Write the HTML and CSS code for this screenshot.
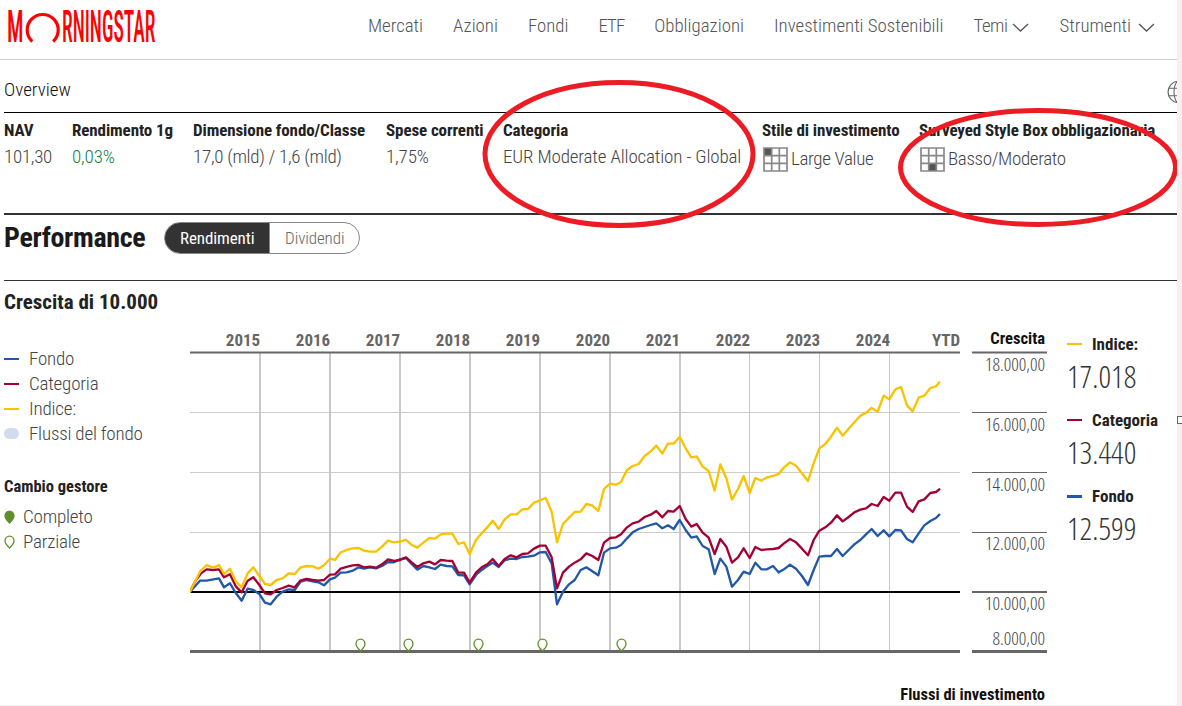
FILE: index.html
```html
<!DOCTYPE html>
<html lang="it">
<head>
<meta charset="utf-8">
<title>Morningstar</title>
<link rel="stylesheet" href="styles.css">
</head>
<body>
<main class="page">
  <header class="topbar">
    <svg class="logo" width="150" height="34" viewBox="7 9 150 34">
      <text class="logo-text" x="7" y="41.5" textLength="16.5" lengthAdjust="spacingAndGlyphs">M</text>
      <path class="logo-arc" d="M32.3 41.5A15.5 15.5 0 1 1 53.1 41.5"/>
      <text class="logo-text" x="62" y="41.5" textLength="93.5" lengthAdjust="spacingAndGlyphs">RNINGSTAR</text>
    </svg>
    <nav class="nav">
      <a>Mercati</a><a>Azioni</a><a>Fondi</a><a class="nav-short">ETF</a><a>Obbligazioni</a><a>Investimenti Sostenibili</a>
      <a class="has-menu nav-temi">Temi <svg class="chev" width="17" height="9" viewBox="0 0 17 9"><path d="M1 1l7.5 7L16 1"/></svg></a>
      <a class="has-menu">Strumenti <svg class="chev" width="17" height="9" viewBox="0 0 17 9"><path d="M1 1l7.5 7L16 1"/></svg></a>
    </nav>
  </header>

  <div class="overview-head">
    <span>Overview</span>
    <svg class="globe" width="24" height="24" viewBox="0 0 22 22"><circle cx="11" cy="11" r="10"/><ellipse cx="11" cy="11" rx="4.6" ry="10"/><path d="M1 7.5h20M1 14.5h20M11 1v20"/></svg>
  </div>

  <section class="stats">
    <div class="stat"><div class="stat-label">NAV</div><div class="stat-value tight">101,30</div></div>
    <div class="stat"><div class="stat-label">Rendimento 1g</div><div class="stat-value is-up">0,03%</div></div>
    <div class="stat"><div class="stat-label">Dimensione fondo/Classe</div><div class="stat-value tight">17,0 (mld) / 1,6 (mld)</div></div>
    <div class="stat"><div class="stat-label">Spese correnti</div><div class="stat-value">1,75%</div></div>
    <div class="stat"><div class="stat-label">Categoria</div><div class="stat-value">EUR Moderate Allocation - Global</div></div>
    <div class="stat"><div class="stat-label">Stile di investimento</div>
      <div class="stat-value with-box">
        <svg class="stylebox" width="25" height="25" viewBox="0 0 25 25"><rect class="cell" x="1" y="1" width="7.7" height="7.7"/><path d="M1 1h23v23H1zM8.7 1v23M16.3 1v23M1 8.7h23M1 16.3h23"/></svg>
        Large Value</div></div>
    <div class="stat"><div class="stat-label">Surveyed Style Box obbligazionaria</div>
      <div class="stat-value with-box">
        <svg class="stylebox" width="25" height="25" viewBox="0 0 25 25"><rect class="cell" x="8.7" y="16.3" width="7.7" height="7.7"/><path d="M1 1h23v23H1zM8.7 1v23M16.3 1v23M1 8.7h23M1 16.3h23"/></svg>
        Basso/Moderato</div></div>
  </section>

  <section class="perf-head">
    <h1>Performance</h1>
    <div class="pill"><span class="pill-on">Rendimenti</span><span class="pill-off">Dividendi</span></div>
  </section>

  <h2 class="growth-title">Crescita di 10.000</h2>

  <section class="chart-row">
    <aside class="legend">
      <div class="legend-row"><i class="swatch blue"></i>Fondo</div>
      <div class="legend-row"><i class="swatch red"></i>Categoria</div>
      <div class="legend-row"><i class="swatch yellow"></i>Indice:</div>
      <div class="legend-row"><i class="swatch flow"></i>Flussi del fondo</div>
      <div class="legend-title">Cambio gestore</div>
      <div class="legend-row pin-row"><svg class="pin filled" width="11" height="14" viewBox="0 0 11 14"><path d="M5.5 13C3 10.500 1 8.500 1 5.700a4.500 4.500 0 0 1 9 0C10 8.500 8 10.500 5.500 13z"/></svg>Completo</div>
      <div class="legend-row pin-row"><svg class="pin" width="11" height="14" viewBox="0 0 11 14"><path d="M5.500 13C3 10.500 1 8.500 1 5.700a4.500 4.500 0 0 1 9 0C10 8.500 8 10.500 5.500 13z"/></svg>Parziale</div>
    </aside>

    <svg class="chart" width="857" height="376" viewBox="190 330 857 376">
      <path class="grid" d="M190 412.500h770M190 472.500h770M190 532.500h770"/>
      <path class="vline" d="M260 353v298M330 353v298M400 353v298M470 353v298M540 353v298M610 353v298M680 353v298"/>
      <path class="vline thin" d="M749.500 353v298M819.500 353v298M889.500 353v298"/>
      <path class="frame" d="M190 352.500h770"/>
      <path class="frame bottom" d="M190 651.500h770"/>
      <path class="zero" d="M190 592h770"/>

      <g transform="translate(0 330) scale(.33333)">
        <g class="series s-blue">
          <polyline points="570,785 600,752 620,752 640,748 657,745 672,772 690,760 708,790 725,812 743,776 760,780 778,792 795,818 812,823 830,800 848,785 866,778 884,780 902,755 920,750 938,754 955,757 972,766 990,748 1005,743 1022,728 1040,727 1058,722 1076,712 1092,716 1110,712 1128,715 1146,708 1164,696 1182,697 1200,688"/>
          <polyline transform="translate(1200 0)" points="0,688 18,684 35,702 52,719 70,708 88,712 105,717 122,704 140,708 157,709 175,735 192,736 209,763 228,735 245,720 262,708 278,698 296,711 314,691 332,686 350,687 367,681 384,680 402,677 420,667 437,666 455,700 471,823 489,785 507,763 524,750 542,720 559,712 577,724 595,736 612,668 630,655 648,653 663,645 681,625 698,607 716,597 734,591 752,585 769,580 787,595 804,586 821,597 839,570 857,600 874,623 890,619 908,648 926,658 944,732 961,686 979,710 996,770 1014,750 1031,725 1049,732 1066,698 1084,718 1101,718 1119,708 1136,727"/>
          <polyline transform="translate(2340 0)" points="-4,727 12,718 30,704 48,716 66,738 84,765 101,720 118,680 136,678 153,678 171,657 188,678 206,660 223,643 241,630 258,613 275,597 293,618 311,601 328,619 346,600 363,601 381,627 398,637 416,610 433,586 451,573 468,564 478,554"/>
        </g>
        <g class="series s-red">
          <polyline points="570,785 585,755 603,730 620,718 640,720 657,718 672,742 690,733 708,770 725,787 743,752 760,742 778,765 795,790 812,793 830,780 848,774 866,767 884,772 902,751 920,747 938,750 955,752 972,750 990,734 1005,733 1022,716 1040,711 1058,706 1076,705 1092,712 1110,710 1128,713 1146,703 1164,688 1182,693 1200,690"/>
          <polyline transform="translate(1200 0)" points="0,690 18,682 35,697 52,711 70,700 88,695 105,703 122,690 140,692 157,693 175,728 192,728 209,758 228,728 245,712 262,703 278,687 296,708 314,687 332,676 350,682 367,672 384,670 402,656 420,647 437,647 455,682 471,775 489,728 507,710 524,698 542,688 559,670 577,678 595,690 612,638 630,624 648,622 663,613 681,592 698,580 716,575 734,561 752,554 769,543 787,562 804,543 821,545 839,528 857,567 874,590 890,582 908,608 926,623 944,672 961,627 979,650 996,698 1014,682 1031,655 1049,684 1066,651 1084,660 1101,658 1119,657 1136,654"/>
          <polyline transform="translate(2340 0)" points="-4,654 12,640 30,627 48,637 66,656 84,676 101,630 118,602 136,592 153,578 171,556 188,574 206,561 223,547 241,539 258,535 275,522 293,528 311,501 328,512 346,488 363,488 381,530 398,546 416,514 433,508 451,489 468,486 478,478"/>
        </g>
        <g class="series s-yellow">
          <polyline points="570,785 600,725 620,705 640,713 657,705 672,732 690,716 708,755 725,772 743,730 760,712 778,738 795,762 812,765 830,750 848,745 866,730 884,732 902,712 920,708 938,709 955,716 972,706 990,686 1005,690 1022,667 1040,660 1058,655 1076,654 1092,662 1110,665 1128,665 1146,650 1164,632 1182,637 1200,635"/>
          <polyline transform="translate(1200 0)" points="0,635 18,630 35,645 52,653 70,638 88,624 105,626 122,613 140,611 157,611 175,642 192,637 209,672 228,630 245,610 262,592 278,572 296,597 314,568 332,553 350,553 367,538 384,537 402,518 420,511 437,504 455,545 471,637 489,582 507,563 524,546 542,545 559,522 577,527 595,543 612,477 630,461 648,464 663,456 681,420 698,408 716,402 734,378 752,364 769,347 787,371 804,341 821,341 839,320 857,355 874,382 890,379 908,410 926,423 944,482 961,403 979,445 996,509 1014,477 1031,438 1049,489 1066,444 1084,452 1101,442 1119,438 1136,432"/>
          <polyline transform="translate(2340 0)" points="-4,432 12,412 30,397 48,407 66,430 84,453 101,400 118,355 136,342 153,320 171,293 188,317 206,296 223,277 241,257 258,249 275,234 293,245 311,197 328,208 346,178 363,171 381,226 398,244 416,203 433,197 451,174 468,169 478,157"/>
        </g>
      </g>

      <g class="chart-pins">
        <path transform="translate(355 638)" d="M5.500 13C3 10.500 1 8.500 1 5.700a4.500 4.500 0 0 1 9 0C10 8.500 8 10.500 5.500 13z"/>
        <path transform="translate(403 638)" d="M5.500 13C3 10.500 1 8.500 1 5.700a4.500 4.500 0 0 1 9 0C10 8.500 8 10.500 5.500 13z"/>
        <path transform="translate(473 638)" d="M5.500 13C3 10.500 1 8.500 1 5.700a4.500 4.500 0 0 1 9 0C10 8.500 8 10.500 5.500 13z"/>
        <path transform="translate(537 638)" d="M5.500 13C3 10.500 1 8.500 1 5.700a4.500 4.500 0 0 1 9 0C10 8.500 8 10.500 5.500 13z"/>
        <path transform="translate(616 638)" d="M5.500 13C3 10.500 1 8.500 1 5.700a4.500 4.500 0 0 1 9 0C10 8.500 8 10.500 5.500 13z"/>
      </g>

      <g class="years" text-anchor="middle">
        <text x="243" y="346">2015</text><text x="313" y="346">2016</text><text x="383" y="346">2017</text>
        <text x="453" y="346">2018</text><text x="523" y="346">2019</text><text x="593" y="346">2020</text>
        <text x="663" y="346">2021</text><text x="733" y="346">2022</text><text x="803" y="346">2023</text>
        <text x="873" y="346">2024</text><text x="946" y="346">YTD</text>
      </g>

      <path class="axis" d="M972 352.500h75"/>
      <path class="axis-thin" d="M972 412.500h75M972 472.500h75M972 532.500h75"/>
      <path class="axis" d="M972 592h75"/>
      <path class="frame bottom" d="M972 651.500h75"/>
      <g class="axis-labels" text-anchor="end">
        <text class="axis-title" x="1045" y="344">Crescita</text>
        <text x="1045" y="371">18.000,00</text>
        <text x="1045" y="431">16.000,00</text>
        <text x="1045" y="491">14.000,00</text>
        <text x="1045" y="550">12.000,00</text>
        <text x="1045" y="610">10.000,00</text>
        <text x="1045" y="645">8.000,00</text>
        <text class="axis-title" x="1045" y="700">Flussi di investimento</text>
      </g>
    </svg>

    <aside class="values">
      <div class="value-label"><i class="swatch yellow"></i>Indice:</div>
      <div class="value-num">17.018</div>
      <div class="value-label"><i class="swatch red"></i>Categoria</div>
      <div class="value-num">13.440</div>
      <div class="value-label"><i class="swatch blue thick"></i>Fondo</div>
      <div class="value-num">12.599</div>
    </aside>
  </section>

  <svg class="marks" width="1177" height="706" viewBox="0 0 1177 706">
    <ellipse cx="619" cy="154" rx="134" ry="71.500"/>
    <ellipse cx="1038" cy="167.500" rx="137.500" ry="57"/>
  </svg>
</main>
<aside class="edge"><i class="edge-handle"></i></aside>
</body>
</html>
```
FILE: styles.css
```css
* { box-sizing: border-box; }
html, body { margin: 0; height: 706px; overflow: hidden; background: #fff; }
body {
  display: flex;
  font-family: Roboto, "Liberation Sans", sans-serif;
  font-stretch: 75%;
  font-weight: 300;
  color: #333;
}
.page {
  position: relative;
  width: 1177px;
  height: 706px;
  overflow: hidden;
  border-bottom: 1px solid #eee;
}
.edge { position: relative; width: 5px; background: #f8f0f0; }
.edge-handle {
  position: absolute; left: 0; top: 416px; width: 5px; height: 8px;
  border: 1.500px solid #666; border-right: 0; background: #fff;
}

/* header */
.topbar {
  height: 60px;
  border-bottom: 1px solid #ccc;
  display: flex;
  justify-content: space-between;
  align-items: flex-start;
  padding: 9px 22px 0 7px;
}
.logo { display: block; overflow: visible; }
.logo-text { font-size: 44.500px; font-weight: 500; fill: #f00; font-stretch: 75%; }
.logo-arc { fill: none; stroke: #f00; stroke-width: 3.200; }
.nav { display: flex; align-items: center; height: 34px; gap: 30px; font-size: 18.850px; color: #555; }
.nav-short { letter-spacing: -1px; }
.has-menu { display: flex; align-items: center; gap: 7px; }
.nav-temi { gap: 5px; letter-spacing: -.5px; }
.chev { fill: none; stroke: #555; stroke-width: 1.300; margin-top: 2px; }

/* overview */
.overview-head {
  height: 52px;
  display: flex;
  justify-content: space-between;
  align-items: center;
  padding: 19px 0 0 4px;
  margin-right: -14px;
  font-size: 19px;
  font-weight: 300;
  color: #111;
}
.overview-head span { line-height: 22px; margin-top: -11px; }
.globe { fill: none; stroke: #666; stroke-width: 1; margin-top: -7px; flex: none; }

.stats {
  margin-left: 4px;
  height: 103px;
  border-top: 1px solid #000;
  border-bottom: 2px solid #333;
  display: grid;
  grid-template-columns: 68px 121px 193px 117px 259px 157px 1fr;
  padding-top: 7px;
}
.stat-label { font-size: 17px; line-height: 20px; font-weight: 700; color: #222; letter-spacing: -.1px; white-space: nowrap; }
.stat-value { font-size: 19px; line-height: 20px; margin-top: 7px; color: #444; white-space: nowrap; letter-spacing: -.15px; }
.stat-value.tight { letter-spacing: -.3px; }
.is-up { color: #14803a; }
.with-box { display: flex; align-items: center; height: 20px; gap: 3px; padding-top: 4px; letter-spacing: -.35px; }
.stylebox { flex: none; margin: 1px 0 0 1px; }
.stylebox path { fill: none; stroke: #888; stroke-width: 1.700; }
.cell { fill: #555; }

/* performance */
.perf-head {
  margin-left: 4px;
  height: 66px;
  padding-bottom: 19px;
  border-bottom: 1px solid #333;
  display: flex;
  align-items: center;
  gap: 19px;
}
.perf-head h1 { margin: 0; font-size: 28px; font-weight: 700; color: #1a1a1a; line-height: 46px; letter-spacing: -.35px; }
.pill {
  display: flex;
  width: 196px;
  height: 32px;
  border: 1px solid #888;
  border-radius: 16px;
  overflow: hidden;
  font-size: 17px;
  line-height: 30px;
  text-align: center;
  letter-spacing: -.1px;
}
.pill-on { width: 104px; background: #333; color: #fff; font-weight: 400; }
.pill-off { flex: 1; color: #666; border-left: 1px solid #888; }

.growth-title {
  margin: 0 0 17px 4px;
  padding-top: 10px;
  font-size: 21px;
  line-height: 22px;
  font-weight: 700;
  color: #222;
}

/* chart row */
.chart-row { display: flex; height: 376px; padding-left: 4px; }
.legend { width: 186px; flex: none; padding-top: 16px; font-size: 19px; color: #444; letter-spacing: -.2px; }
.legend-row { display: flex; align-items: center; height: 25px; gap: 10px; }
.swatch { display: block; width: 15px; height: 2px; flex: none; }
.blue { background: #2158a8; }
.red { background: #a50034; }
.yellow { background: #f5c400; }
.flow { height: 11px; border-radius: 6px; background: #d1ddee; }
.thick { height: 3px; }
.legend-title { margin-top: 29px; margin-bottom: 5px; height: 24px; line-height: 24px; font-size: 16.500px; font-weight: 700; color: #222; letter-spacing: 0; }
.pin-row { gap: 8px; }
.pin { flex: none; fill: #fff; stroke: #5f8f2a; stroke-width: 1.300; }
.pin.filled { fill: #5f8f2a; }

.chart { display: block; flex: none; font-family: inherit; }
.grid { stroke: #ccc; stroke-width: 1; fill: none; }
.vline { stroke: #c8c8c8; stroke-width: 2; fill: none; }
.vline.thin { stroke-width: 1; }
.frame { stroke: #666; stroke-width: 2; fill: none; }
.frame.bottom { stroke-width: 3; }
.zero { stroke: #000; stroke-width: 2; fill: none; }
.series polyline { fill: none; stroke-width: 7; stroke-linejoin: round; stroke-linecap: round; }
.s-blue polyline { stroke: #2158a8; }
.s-red polyline { stroke: #a50034; }
.s-yellow polyline { stroke: #f8c300; }
.chart-pins path { fill: #fff; stroke: #5f8f2a; stroke-width: 1.300; }
.years text { font-size: 17px; font-weight: 700; fill: #666; }
.axis { stroke: #666; stroke-width: 2; fill: none; }
.axis-thin { stroke: #666; stroke-width: 1; fill: none; }
.axis-labels text { font-family: "Open Sans", sans-serif; font-size: 18.500px; fill: #444; }
.axis-labels .axis-title { font-family: Roboto, sans-serif; font-size: 16.500px; font-weight: 700; fill: #111; }

.values { margin-left: 20px; flex: none; width: 100px; }
.value-label { display: flex; align-items: center; height: 28px; gap: 10px; font-size: 17px; font-weight: 700; color: #222; }
.value-num { height: 38px; line-height: 38px; margin: -1px 0 11px; font-family: "Open Sans", sans-serif; font-size: 31px; color: #333; }

/* hand-drawn annotations */
.marks { position: absolute; left: 0; top: 0; pointer-events: none; }
.marks ellipse { fill: none; stroke: #ed1c24; stroke-width: 5; }
```
